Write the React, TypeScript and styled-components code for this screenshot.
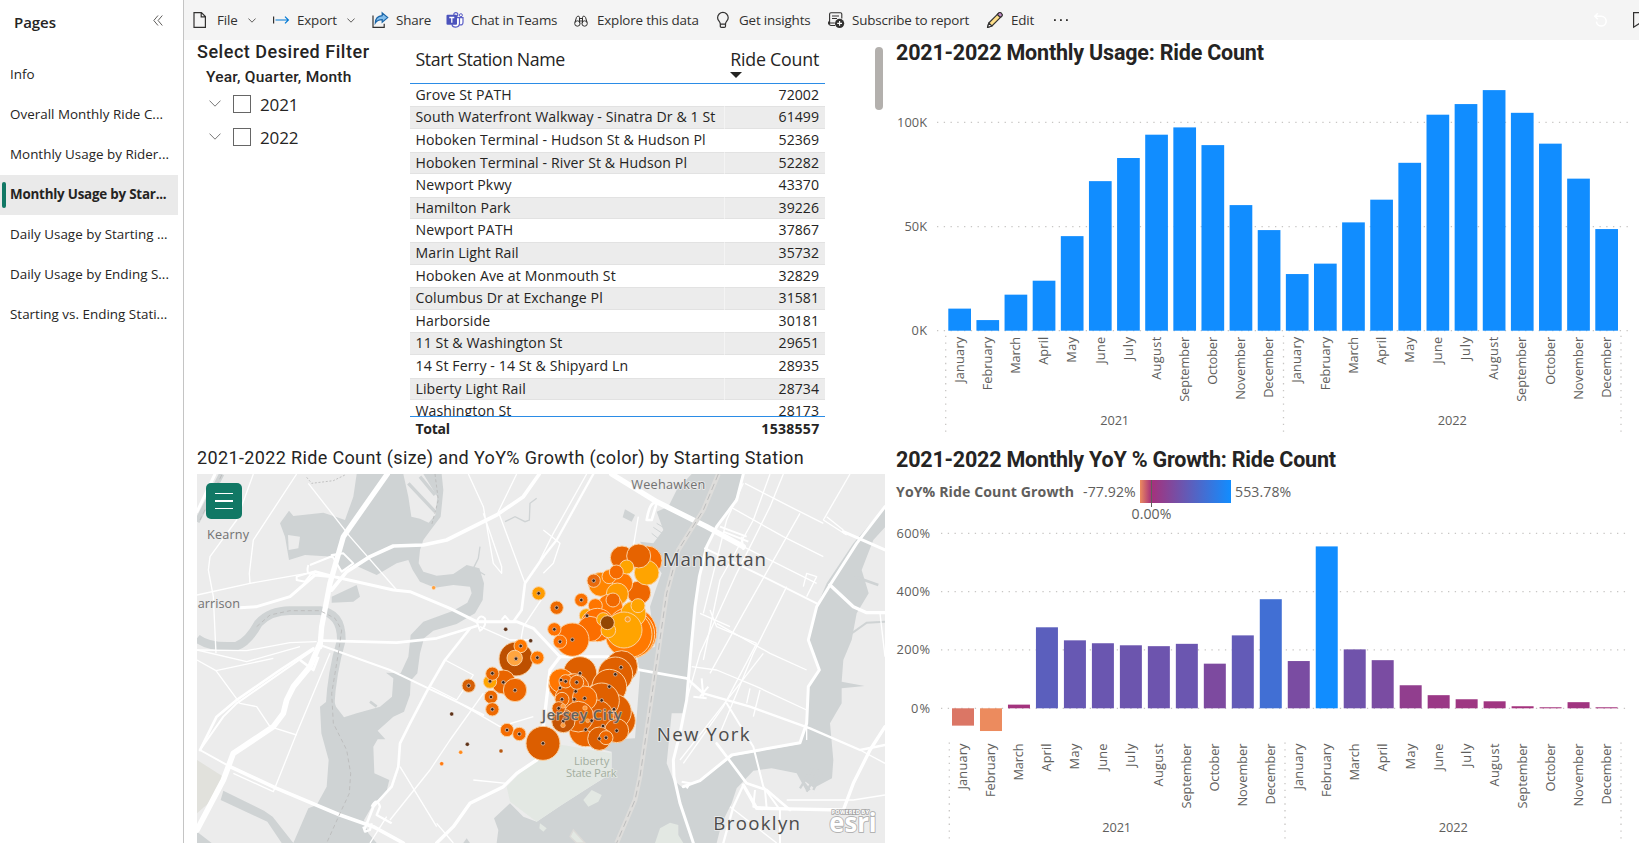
import React from 'react';
import styled, { createGlobalStyle } from 'styled-components';

const UI = '"Open Sans", "Noto Sans", sans-serif';
const DIN = 'Roboto, "Liberation Sans", sans-serif';

const Global = createGlobalStyle`
  *, *::before, *::after { box-sizing: border-box; }
  body { margin: 0; background: #fff; font-family: ${UI}; color: #252423; overflow: hidden; }
`;

/* ---------- shell ---------- */

const Shell = styled.div`
  display: flex;
  width: 1639px;
  height: 843px;
  overflow: hidden;
`;

const Sidebar = styled.nav`
  flex: 0 0 184px;
  border-right: 1px solid #c4c4c4;
  display: flex;
  flex-direction: column;
`;

const SidebarHead = styled.div`
  height: 55px;
  padding: 11px 20px 0 14px;
  display: flex;
  justify-content: space-between;
`;

const SidebarTitle = styled.h1`
  margin: 0;
  font-size: 15px;
  line-height: 23px;
  font-weight: 600;
  letter-spacing: -0.05px;
`;

const CollapseIcon = styled.svg`
  width: 10px;
  height: 11px;
  margin-top: 4px;
`;

const PageItem = styled.div<{ $active?: boolean }>`
  display: flex;
  align-items: center;
  width: 178px;
  height: 40px;
  padding: 0 0 2px 2px;
  font-size: 13.4px;
  letter-spacing: ${p => (p.$active ? '-0.22px' : '0.02px')};
  font-weight: ${p => (p.$active ? 700 : 400)};
  background: ${p => (p.$active ? '#eaeaea' : 'transparent')};
  white-space: nowrap;
  &::before {
    content: '';
    width: 4px;
    height: 26px;
    margin: 1px 4px 0 0;
    border-radius: 2px;
    background: ${p => (p.$active ? '#117865' : 'transparent')};
  }
`;

const Main = styled.main`
  flex: 1;
  min-width: 0;
  display: flex;
  flex-direction: column;
`;

/* ---------- toolbar ---------- */

const Toolbar = styled.header`
  flex: 0 0 40px;
  background: #f4f4f4;
  display: flex;
  align-items: center;
  padding-left: 9px;
  overflow: hidden;
`;

const Tool = styled.div<{ $w: number }>`
  flex: 0 0 ${p => p.$w}px;
  display: flex;
  align-items: center;
  gap: 8px;
  font-size: 13.4px;
  letter-spacing: -0.17px;
  white-space: nowrap;
  color: #323130;
`;

const Icon = styled.svg`
  flex: 0 0 16px;
  width: 16px;
  height: 16px;
  overflow: visible;
`;

const SmallChevron = styled.svg`
  width: 8px;
  height: 5px;
  margin-left: 2px;
`;

const ToolbarEnd = styled.div`
  flex: 1;
  display: flex;
  justify-content: flex-end;
  gap: 24px;
  margin-right: -9px;
`;

/* ---------- report ---------- */

const Report = styled.div`
  flex: 1;
  display: flex;
  min-height: 0;
`;

const LeftColumn = styled.div`
  flex: 0 0 711px;
  display: flex;
  flex-direction: column;
`;

const RightColumn = styled.div`
  flex: 1;
  min-width: 0;
  display: flex;
  flex-direction: column;
`;

const TopRow = styled.div`
  height: 400px;
  display: flex;
  padding-left: 13px;
`;

const Slicer = styled.section`
  flex: 0 0 213px;
  font-family: ${DIN};
`;

const SlicerTitle = styled.h2`
  margin: 0;
  font-size: 18px;
  line-height: 24px;
  font-weight: 500;
  letter-spacing: 0.53px;
  white-space: nowrap;
`;

const SlicerField = styled.div`
  padding-left: 9px;
  margin-top: 1px;
  font-size: 15.5px;
  line-height: 24px;
  font-weight: 500;
  letter-spacing: 0.24px;
  white-space: nowrap;
`;

const SlicerRow = styled.div`
  display: flex;
  align-items: center;
  height: 33px;
  padding: 0 0 2px 12px;
  font-family: ${UI};
  font-size: 17px;
  letter-spacing: -0.1px;
`;

const SlicerChevron = styled.svg`
  width: 12px;
  height: 7px;
  margin: -3px 12px 0 0;
`;

const CheckBox = styled.span`
  width: 18px;
  height: 18px;
  border: 1px solid #666;
  margin: -1px 9px 0 0;
`;

/* ---------- table ---------- */

const TableWrap = styled.section`
  width: 415px;
  display: flex;
  flex-direction: column;
`;

const TableHead = styled.div`
  height: 44px;
  display: flex;
  justify-content: space-between;
  padding: 7px 6px 0 5.5px;
  border-bottom: 1px solid #2b8ce6;
  font-size: 17.8px;
  line-height: 24px;
  letter-spacing: -0.42px;
`;

const SortedHead = styled.div`
  display: flex;
  flex-direction: column;
  align-items: flex-start;
  letter-spacing: -0.22px;
`;

const SortArrow = styled.span`
  width: 0;
  height: 0;
  margin-top: 1px;
  border: 6px solid transparent;
  border-top-color: #252423;
  border-bottom: 0;
`;

const TableBody = styled.div`
  height: 335px;
  overflow: hidden;
  border-bottom: 1px solid #2b8ce6;
`;

const TableRow = styled.div<{ $odd?: boolean; $total?: boolean }>`
  height: 22.6px;
  display: flex;
  background: ${p => (p.$odd ? '#ececec' : '#fff')};
  font-size: 14.1px;
  line-height: ${p => (p.$total ? '24.6px' : '22.6px')};
  font-weight: ${p => (p.$total ? 700 : 400)};
  white-space: nowrap;
  box-shadow: ${p => (p.$odd ? 'inset 0 1px #e2e2e2, inset 0 -1px #e2e2e2' : 'none')};
`;

const NameCell = styled.div<{ $total?: boolean }>`
  width: 315px;
  padding-left: 5.5px;
  border-right: 1px solid rgba(255, 255, 255, 0.45);
  letter-spacing: ${p => (p.$total ? '-0.3px' : '0.1px')};
`;

const CountCell = styled.div<{ $total?: boolean }>`
  flex: 1;
  padding-right: ${p => (p.$total ? 5.5 : 6)}px;
  text-align: right;
  letter-spacing: ${p => (p.$total ? '0.25px' : '0.02px')};
`;

const ScrollThumb = styled.div`
  width: 8px;
  height: 63px;
  margin: 7px 0 0 50px;
  border-radius: 4px;
  background: #b3b0ad;
`;

/* ---------- map ---------- */

const MapCard = styled.section`
  padding-left: 13px;
`;

const MapTitle = styled.h2`
  margin: 0;
  height: 34px;
  padding-top: 6px;
  font: 400 18px/24px ${DIN};
  letter-spacing: 0.36px;
  white-space: nowrap;
`;

const MapFrame = styled.div`
  position: relative;
  width: 688px;
  height: 369px;
`;

const MapSvg = styled.svg`
  display: block;
  width: 688px;
  height: 369px;
`;

const MapMenu = styled.div`
  position: absolute;
  left: 9px;
  top: 9px;
  width: 36px;
  height: 36px;
  border-radius: 5px;
  background: #117865;
  display: flex;
  flex-direction: column;
  align-items: center;
  justify-content: center;
  gap: 6px;
  span {
    width: 18px;
    height: 1.5px;
    background: #fff;
  }
`;

/* ---------- charts ---------- */

const ChartTitle = styled.h2`
  margin: 0;
  padding-left: 1px;
  font: 700 21.5px/26px ${DIN};
  letter-spacing: -0.2px;
  white-space: nowrap;
`;

const UsageCard = styled.section`
  height: 407px;
`;

const GrowthCard = styled.section`
  flex: 1;
`;

const ChartSvg = styled.svg<{ $h: number }>`
  display: block;
  width: 744px;
  height: ${p => p.$h}px;
  font-family: ${UI};
  font-size: 12.8px;
  fill: #605e5c;
`;

const Legend = styled.div`
  display: flex;
  height: 45px;
  padding: 7px 0 0 1px;
  font-size: 14.1px;
  line-height: 23px;
  letter-spacing: 0.1px;
  color: #605e5c;
  white-space: nowrap;
`;

const LegendName = styled.strong`
  width: 187px;
`;

const LegendMin = styled.span`
  width: 57px;
`;

const LegendRamp = styled.div`
  position: relative;
  width: 91px;
  height: 23px;
  margin-right: 4px;
  background: linear-gradient(to right, #ec8b5e, #a6317b 12.3%, #118dff);
`;

const LegendZero = styled.div`
  position: absolute;
  left: 11px;
  top: 0;
  width: 1px;
  height: 27px;
  background: #605e5c;
  display: flex;
  justify-content: center;
  span { margin-top: 22px; }
`;

/* ---------- data ---------- */

const PAGES = [
  'Info',
  'Overall Monthly Ride C...',
  'Monthly Usage by Rider...',
  'Monthly Usage by Star...',
  'Daily Usage by Starting ...',
  'Daily Usage by Ending S...',
  'Starting vs. Ending Stati...',
];

const STATIONS: [string, number][] = [
  ['Grove St PATH', 72002],
  ['South Waterfront Walkway - Sinatra Dr & 1 St', 61499],
  ['Hoboken Terminal - Hudson St & Hudson Pl', 52369],
  ['Hoboken Terminal - River St & Hudson Pl', 52282],
  ['Newport Pkwy', 43370],
  ['Hamilton Park', 39226],
  ['Newport PATH', 37867],
  ['Marin Light Rail', 35732],
  ['Hoboken Ave at Monmouth St', 32829],
  ['Columbus Dr at Exchange Pl', 31581],
  ['Harborside', 30181],
  ['11 St & Washington St', 29651],
  ['14 St Ferry - 14 St & Shipyard Ln', 28935],
  ['Liberty Light Rail', 28734],
  ['Washington St', 28173],
];

const MONTHS: [string, number][] = [
  ['January', 46], ['February', 53.5], ['March', 37], ['April', 28], ['May', 26], ['June', 27],
  ['July', 23.5], ['August', 43], ['September', 65], ['October', 48], ['November', 63], ['December', 61],
];

const RIDES = [
  10.6, 5.1, 17.3, 24, 45.4, 71.8, 82.9, 94.1, 97.6, 89.1, 60.3, 48.3,
  27.2, 32.2, 52, 62.9, 80.6, 103.7, 108.8, 115.5, 104.6, 89.8, 73, 48.8,
];

const GROWTH = [
  -59.4, -77.9, 12.6, 277.7, 233, 223, 216, 213, 221, 153, 250, 374,
  162, 555, 202, 165, 79, 45, 31, 24, 7, 3.5, 21, 3.5,
];

const mix = (a: number[], b: number[], t: number) =>
  `rgb(${a.map((v, i) => Math.round(v + (b[i] - v) * t)).join(',')})`;

const growthColor = (v: number) =>
  v < 0
    ? mix([166, 49, 123], [236, 139, 94], Math.min(1, -v / 77.92))
    : mix([166, 49, 123], [17, 141, 255], Math.min(1, v / 553.78));

/* ---------- icons ---------- */

const FileIcon = () => (
  <Icon viewBox="0 0 16 16" fill="none" stroke="#323130" strokeWidth="1.2">
    <path d="M1 .6h7.4l4 4v10.800H1zM8.200.8v4h4" />
  </Icon>
);
const ExportIcon = () => (
  <Icon viewBox="0 0 16 16" fill="none" strokeWidth="1.2">
    <path d="M.6 4.5v7" stroke="#323130" />
    <path d="M2.5 8h13M12 4.6 15.4 8 12 11.4" stroke="#0078d4" />
  </Icon>
);
const ShareIcon = () => (
  <Icon viewBox="0 0 16 16" fill="none" strokeWidth="1.2">
    <path d="M1 3.5v11.8h11.2v-3.6" stroke="#323130" />
    <path d="M10.2.9 15.700 5.6l-5.5 4.7V7.6C6.900 7.600 4.700 8.700 3.300 11 3.400 7 5.900 4 10.200 3.600z" fill="#83beec" stroke="#1a65a8" />
  </Icon>
);
const TeamsIcon = () => (
  <Icon viewBox="0 0 16 16">
    <circle cx="8.800" cy="2.600" r="2" fill="none" stroke="#5b5fc7" strokeWidth="1.200" />
    <circle cx="13.900" cy="3.200" r="1.500" fill="none" stroke="#5b5fc7" />
    <path d="M6.500 5.700h6v5.500c0 5-7 5-7.500 1.200M12.500 5.700h3.500v4.500c0 2.600-1.600 3-3.300 2.600" fill="#fff" stroke="#5b5fc7" strokeWidth="1.200" />
    <rect x="-.5" y="2.800" width="10.500" height="10" rx="1" fill="#4b53bc" />
    <path d="M2.300 5.500h5M4.800 5.500v5.200" stroke="#fff" strokeWidth="1.300" />
  </Icon>
);
const BinocularsIcon = () => (
  <Icon viewBox="0 0 16 16" fill="none" stroke="#323130" strokeWidth="1">
    <circle cx="4.400" cy="11.500" r="2.700" />
    <circle cx="11.600" cy="11.500" r="2.700" />
    <path d="M1.900 10.500 3.500 5.300c.6-1.500 3-1.500 3 0v6M14.100 10.500 12.500 5.300c-.6-1.500-3-1.500-3 0v6M6.500 6.500h3M6.800 9h2.400" />
  </Icon>
);
const BulbIcon = () => (
  <Icon viewBox="0 0 16 16" fill="none" stroke="#323130" strokeWidth="1.200">
    <path d="M5.300 12c0-2.500-2.700-3.200-2.700-6.300a5.300 5.300 0 0 1 10.600 0c0 3.100-2.700 3.800-2.700 6.300v2.200q0 1.200-1.200 1.200H6.500q-1.200 0-1.200-1.200zM5.300 12.200H10.500" />
  </Icon>
);
const SubscribeIcon = () => (
  <Icon viewBox="0 0 16 16" fill="none" stroke="#323130" strokeWidth="1.100">
    <path d="M7 13.500H3q-1.500 0-1.500-1.500H.600V10h1V2q0-1.300 1.400-1.300h9.500q1.300 0 1.300 1.300v4.500M4 4h7M4 6.500h5M.800 11h6" />
    <circle cx="11.600" cy="11.400" r="4.600" fill="#323130" stroke="none" />
    <path d="M9.200 11.400h4.800M11.600 9v4.800" stroke="#fff" />
  </Icon>
);
const PencilIcon = () => (
  <Icon viewBox="0 0 16 16" strokeWidth="1.100" stroke="#323130" strokeLinejoin="round">
    <path d="M.500 15.500 1.800 11 11.900.900c1.500-1.200 4.200 1.300 3.100 3L4.900 14z" fill="#ffe08a" />
    <path d="M10.300 2.500 11.900.900c1.500-1.200 4.200 1.300 3.100 3l-1.600 1.600z" fill="#c38bc8" />
    <path d="M1.800 11 4.900 14l-4.400 1.500z" fill="#fff" />
  </Icon>
);
const DotsIcon = () => (
  <Icon viewBox="0 0 16 16" fill="#323130">
    <rect x="1" y="7.200" width="1.800" height="1.800" />
    <rect x="7" y="7.200" width="1.800" height="1.800" />
    <rect x="13" y="7.200" width="1.800" height="1.800" />
  </Icon>
);
const ResetIcon = () => (
  <Icon viewBox="0 0 16 16" fill="none" stroke="#fff" strokeWidth="1.500">
    <path d="M3 4.300h6.300a4.900 4.900 0 1 1-4.900 5.400M5.800 1.300 2.800 4.300l3 3" />
  </Icon>
);
const BookmarkIcon = () => (
  <Icon viewBox="0 0 16 16" fill="none" stroke="#323130" strokeWidth="1.200">
    <path d="M1.600.6h11.800v14.600L7.500 11.400 1.600 15.200z" />
  </Icon>
);

const Chevron = () => (
  <SmallChevron viewBox="0 0 8 5" fill="none" stroke="#605e5c">
    <path d="M.4.500 4 4.200 7.600.500" />
  </SmallChevron>
);

const TOOLS: { icon: React.ReactNode; label: string; w: number; menu?: boolean }[] = [
  { icon: <FileIcon />, label: 'File', w: 80, menu: true },
  { icon: <ExportIcon />, label: 'Export', w: 99, menu: true },
  { icon: <ShareIcon />, label: 'Share', w: 75 },
  { icon: <TeamsIcon />, label: 'Chat in Teams', w: 126 },
  { icon: <BinocularsIcon />, label: 'Explore this data', w: 142 },
  { icon: <BulbIcon />, label: 'Get insights', w: 113 },
  { icon: <SubscribeIcon />, label: 'Subscribe to report', w: 159 },
  { icon: <PencilIcon />, label: 'Edit', w: 66 },
  { icon: <DotsIcon />, label: '', w: 30 },
];

/* ---------- map drawing ---------- */

type Bubble = [x: number, y: number, r: number, fill: string];

const BUBBLES: Bubble[] = [
  [622, 92, 44, '#f76c00'], [546, 83, 35, '#e86400'], [597, 188, 35, '#ee6700'], [545, 160, 33, '#ff7800'],
  [620, 128, 37, '#ffa400'], [596, 78, 36, '#e66300'], [482, 163, 36, '#ff8500'], [560, 111, 21, '#ffa400'],
  [507, 140, 21, '#ff7f00'], [529, 126, 21, '#f66b00'], [461, 152, 20, '#e96a0c'], [532, 192, 33, '#ff9a00'],
  [510, 230, 38, '#ff7700'], [519, 210, 21, '#f06800'], [466, 227, 21, '#ff7500'], [439, 257, 21, '#ffa400'],
  [573, 308, 77, '#ff7000'], [572, 313, 72, '#ff7a00'], [566, 313, 70, '#ff7900'], [580, 252, 38, '#ffa400'],
  [594, 227, 21, '#ffa400'], [472, 285, 50, '#ff7000'], [450, 297, 38, '#fb6e00'], [552, 300, 54, '#ffa400'],
  [490, 268, 20, '#ffa400'], [505, 301, 22, '#ffa400'], [502, 278, 21, '#934704'], [563, 268, 8, '#ff9d20'],
  [397, 329, 50, '#fa6d00'], [360, 335, 20, '#ff7200'], [343, 298, 20, '#ff7200'], [424, 210, 20, '#fa7000'],
  [350, 233, 20, '#ee6a00'], [296, 190, 20, '#ff9d00'], [228, 387, 51, '#bd5000'], [242, 348, 20, '#ff7800'],
  [224, 384, 23, '#ffa53f'], [292, 383, 20, '#ff7800'], [190, 456, 36, '#e96500'], [150, 455, 20, '#ffa400'],
  [157, 431, 20, '#ea6700'], [225, 480, 35, '#ec6600'], [153, 501, 20, '#ea6700'], [157, 538, 20, '#ee6900'],
  [86, 467, 20, '#d55f05'], [201, 600, 20, '#f56c00'], [238, 612, 20, '#f56c00'], [309, 640, 51, '#dc5e00'],
  [420, 430, 50, '#dd5f00'], [545, 410, 48, '#dc5e00'], [526, 433, 52, '#e06000'], [508, 470, 52, '#e06000'],
  [536, 572, 50, '#e06000'], [521, 545, 53, '#e06000'], [437, 600, 50, '#ea6500'], [485, 512, 53, '#e06000'],
  [370, 466, 44, '#ee6800'], [363, 452, 36, '#ff7600'], [403, 475, 44, '#ee6800'], [385, 505, 40, '#e96500'],
  [470, 560, 50, '#e06000'], [434, 505, 37, '#f46b00'], [377, 454, 20, '#f46b00'], [410, 457, 21, '#e96500'],
  [366, 508, 21, '#ea6600'], [415, 560, 46, '#e56300'], [370, 573, 35, '#c65505'], [356, 535, 20, '#e06000'],
  [530, 602, 36, '#e06000'], [478, 626, 35, '#dc5e00'], [498, 623, 21, '#ee6800'],
];

const PINS: [number, number][] = [
  [461, 152], [441, 257], [397, 329], [360, 335], [343, 298], [424, 210], [350, 233], [296, 190], [242, 348],
  [228, 386], [292, 383], [190, 457], [150, 454], [157, 430], [225, 481], [153, 501], [157, 538], [86, 467],
  [201, 600], [238, 612], [309, 640], [420, 430], [543, 412], [526, 433], [508, 470], [485, 511], [522, 538],
  [437, 599], [363, 450], [377, 454], [360, 474], [410, 457], [407, 484], [403, 508], [366, 508], [434, 505],
  [356, 535], [370, 573], [455, 572], [489, 588], [530, 602], [478, 626], [498, 623],
];

const FREE_DOTS: Bubble[] = [
  [197, 298, 6, '#5e3218'], [272, 332, 6, '#5e3218'], [35, 552, 6, '#5e3218'], [82, 643, 6, '#5e3218'],
  [183, 663, 6, '#b65a14'], [62, 667, 6, '#ff8a1c'], [5, 701, 6, '#ff7a10'], [-19, 173, 6, '#ffa03c'],
  [369, 528, 7, '#ff9c3c'], [435, 534, 7, '#ff9c3c'], [369, 586, 7, '#ff9c3c'], [443, 572, 6, '#ff9c3c'],
];

const WATER = [
  'M500 102 L755 102 L760 150 L752 230 L722 270 L700 300 L690 330 L686 370 L700 395 L740 407 L790 402 L830 375 L868 385 L882 430 L878 480 L855 520 L800 552 L730 572 L702 595 L690 640 L682 700 L662 722 L660 765 L642 815 L610 830 L563 872 L586 898 L563 898 L550 920 L553 1000 L598 1020 L590 1052 L545 1100 L522 1140 L535 1180 L560 1209 L310 1209 L355 1105 L380 1095 L410 1040 L416 960 L394 880 L390 800 L428 770 L438 800 L462 832 L500 820 L570 800 L606 770 L610 715 L588 698 L632 700 L655 650 L662 585 L700 545 L790 512 L832 488 L845 460 L840 440 L790 435 L735 443 L690 425 L668 390 L655 360 L620 370 L560 405 L500 378 L455 390 L430 350 L345 345 L297 360 L285 290 L270 250 L297 212 L310 228 L400 218 L430 228 L465 240 L490 170 Z',
  'M100 1052 L222 1112 L248 1130 L310 1209 L275 1209 L232 1145 L92 1080 Z',
  'M21 1175 L65 1209 L21 1209 Z',
  'M425 470 L500 435 L510 470 L490 485 L425 488 Z',
  'M1505 102 L1660 102 L1640 180 L1580 260 L1550 320 L1530 400 L1515 490 L1500 640 L1490 760 L1485 820 L1445 820 L1430 970 L1450 1020 L1480 1045 L1530 1022 L1630 948 L1830 912 L1850 850 L1855 740 L1888 690 L1855 600 L1880 500 L1910 430 L1990 310 L2085 200 L2085 262 L2050 300 L2015 390 L2036 460 L2000 520 L1985 600 L1960 660 L1955 725 L2024 738 L1955 745 L1955 790 L1920 850 L1930 960 L1926 1015 L1850 1055 L1820 1000 L1745 985 L1690 992 L1640 1045 L1625 1090 L1595 1150 L1580 1209 L920 1209 L925 1170 L912 1135 L960 1090 L1000 1130 L1040 1145 L1110 1098 L1200 1040 L1265 1000 L1265 935 L1140 905 L1335 895 L1350 700 L1340 640 L1395 620 L1380 500 L1400 440 L1415 400 L1350 305 L1390 310 L1420 270 L1400 215 L1435 200 L1460 150 Z',
  'M1305 208 L1335 225 L1325 245 L1298 232 Z',
  'M820 1209 L830 1195 L840 1209 Z',
];

const LAND = [
  'M640 102 L700 102 L742 170 L736 225 L716 248 L690 236 L664 230 L655 170 Z',
  'M294 285 L330 290 L325 325 L296 330 Z',
  'M1840 1020 L1880 1050 L1870 1060 Z',
];

const HIGHWAYS: [string, number][] = [
  ['M592 102 L460 290 L420 430 L395 560 L390 620', 16],
  ['M1048 102 L1000 170 L920 225 L770 300 L700 315 L610 318 L540 350 L470 395 L425 450', 11],
  ['M375 395 L440 412 L610 450 L660 455 L780 505 L860 545 L980 545 L1030 565 L1110 650 L1300 650', 9],
  ['M400 602 L620 608 L740 595 L860 558', 8],
  ['M390 610 L360 680 L310 740 L290 780 L280 820 L250 860 L130 940 L100 1020 L21 1170', 17],
  ['M370 625 L270 690 L140 780 L80 830 L30 930', 8],
  ['M370 630 L140 790 L100 830 L30 930 L120 980', 6],
  ['M120 980 L260 1045 L450 1125 L550 1160 L640 1209', 11],
  ['M390 615 L600 690 L715 745 L810 790 L880 825', 6],
  ['M840 565 L765 660 L710 755 L660 850 L630 910 L625 980 L605 1040 L550 1100 L525 1165', 8],
  ['M1040 960 L980 1000 L940 1040 L840 1090 L790 1160 L740 1209', 10],
  ['M150 503 L200 500 L300 470 L375 405 L430 410', 9],
  ['M21 215 L75 102', 9],
  ['M1060 350 L1005 430 L995 510 L970 545', 8],
  ['M1210 102 L1100 300 L1060 350', 7],
  ['M1265 102 L1400 185 L1550 260 L1660 320', 16],
  ['M1545 325 L1700 400 L1880 490', 6],
  ['M1660 102 L1640 180 L1580 260 L1550 320 L1528 410 L1515 500 L1500 660 L1490 780 L1470 880 L1450 960 L1452 1010 L1470 1090 L1510 1209', 9],
  ['M1480 1040 L1530 1022 L1625 945 L1830 908 L1850 850 L1855 740 L1888 690 L1855 600 L1880 500 L1920 435 L2000 310 L2085 200', 9],
  ['M1920 435 L1990 500 L2030 518 L2085 518', 10],
  ['M1960 275 L2085 330', 9],
  ['M1340 688 L1490 715 L1540 760', 8],
  ['M1540 760 L1680 800 L1860 865 L2010 930 L2085 915', 7],
  ['M1580 910 L1670 1030 L1730 1050 L1800 1110', 8],
  ['M1610 790 L1690 920 L1720 1040 L1770 1110 L1770 1209', 6],
  ['M1660 1035 L1700 1105 L1960 1110 L1990 1030 L2040 930 L2085 860', 10],
  ['M1660 1035 L1630 1100 L1600 1209', 7],
  ['M1110 650 L1080 690 L1060 860', 10],
];

const STREETS = [
  'M190 102 L140 240 L60 350 L55 390 L70 470 L78 640', 'M320 102 L190 300 L178 400 L180 430', 'M21 465 L180 430 L350 400',
  'M355 130 L480 290 L620 450', 'M21 630 L170 632 L300 608 L380 605', 'M21 630 L170 665 L330 620', 'M21 660 L78 692 L250 655',
  'M78 692 L150 790 L200 800 L240 860 L320 885', 'M420 640 L320 880 L250 1055 L130 1000', 'M835 102 L880 200 L910 370 L935 400 L935 380 L880 220',
  'M980 102 L925 215 L1005 430', 'M1060 470 L1000 560 L985 640', 'M870 560 L960 600 L1030 600', 'M765 660 L850 705 L800 780 L720 740',
  'M880 760 L780 900 L720 990 L600 1140', 'M630 980 L740 1160', 'M810 790 L930 860 L1030 830', 'M1190 102 L1090 280 L1050 360', 'M1060 270 L1110 310 L1090 370 L1060 400',
  'M1345 230 L1330 320', 'M1665 130 L1800 200 L1900 250', 'M1660 130 L1610 240 L1540 520', 'M1740 102 L1690 240 L1590 420 L1540 660',
  'M1780 102 L1740 200 L1640 400 L1530 640 L1490 780', 'M1830 220 L1660 520 L1560 700', 'M1790 440 L1690 640 L1590 880',
  'M1580 550 L1740 640 L1850 690', 'M1530 520 L1620 560', 'M1505 680 L1580 690 L1700 740 L1850 810', 'M1620 200 L1780 290 L1900 350',
  'M1600 290 L1820 400 L1880 430', 'M1560 510 L1580 560 L1700 610', 'M1720 640 L1580 820 L1470 960', 'M1700 610 L1600 800 L1480 970',
  'M1900 240 L1980 102', 'M1900 240 L1970 285 M1910 230 L1960 270', 'M1850 820 L1850 900', 'M1710 750 L1690 830', 'M1680 745 L1670 790',
  'M1790 1080 L1990 1080 L2085 1065', 'M1620 1100 L1760 1209', 'M2070 520 L2085 650', 'M2010 930 L2085 970', 'M1840 440 L1850 400 L1880 410 L1850 470',
  'M850 1020 L950 1030 L990 990', 'M740 1150 L790 1209', 'M590 1130 L540 1209',
];

const LINES: [string, string][] = [
  ['M350 112 L365 130 L430 122 L465 105', '6 5'],
  ['M735 102 L745 180 L725 255', '9 7'],
  ['M95 105 L30 240', '14 9'],
  ['M200 560 L240 525 L300 512 L390 512 L435 535 L455 570 L445 640 L425 760 L430 850 L470 930 L482 1000 L478 1060 L450 1120 L410 1209', '12 9'],
];

const STATE_LINE = 'M1585 102 L1540 210 L1465 330 L1430 460 L1395 700 L1350 1010 L1335 1080 L1280 1209';

const StationMap = () => (
  <MapSvg viewBox="21 102 2064 1107" preserveAspectRatio="none">
    <rect x="21" y="102" width="2064" height="1107" fill="#ececec" />
    <path d="M21 960 L60 985 L100 1010 L55 1090 L21 1120Z" fill="#e1e1dc" />
    {WATER.map(d => <path key={d} d={d} fill="#cfd3d4" />)}
    <g fill="none" stroke="#cfd3d4">
      <path d="M21 595 Q60 625 140 618 Q175 605 205 550 Q240 512 300 512 L390 512 Q455 520 454 600 Q425 700 420 800" strokeWidth="26" />
      <path d="M95 102 L55 180 L21 245" strokeWidth="16" />
      <path d="M945 245 L975 230 L1005 245 L1018 240 L1020 190 L1040 175" strokeWidth="4" />
      <path d="M870 320 L865 355 L850 385 L885 405" strokeWidth="4" />
      <path d="M540 785 L560 800" strokeWidth="8" />
      <path d="M2085 545 L2030 548 L1985 580" strokeWidth="6" />
      <path d="M1400 250 L1430 268 M1390 262 L1420 282 M1385 280 L1405 296" strokeWidth="3" />
      <path d="M1995 410 L2065 435" strokeWidth="8" />
    </g>
    {LAND.map(d => <path key={d} d={d} fill="#ececec" />)}
    <path d="M690 110 L735 165 M655 130 L735 215" stroke="#cfd3d4" strokeWidth="10" />
    <g fill="#e3e8e3">
      <path d="M1060 905 L1265 940 L1262 1000 L1200 1040 L1110 1098 L1040 1145 L960 1085 L950 1040 L1030 960Z" />
      <path d="M1395 1209 L1410 1165 L1440 1148 L1465 1155 L1465 1185 L1480 1209Z" />
      <path d="M1050 1150 L1070 1165 L1060 1175 L1048 1165Z" />
      <path d="M1180 1080 L1205 1050 L1235 1065 L1225 1085 L1195 1100Z" />
      <path d="M1140 1190 L1150 1170 L1185 1209 L1160 1209Z" stroke="#dcdad7" strokeWidth="4" />
    </g>
    <path d="M1830 1045 L1870 980 M1850 1055 L1885 990 M1870 1050 L1895 1000" stroke="#cfd3d4" strokeWidth="7" />
    <g fill="none" stroke="#fff" strokeWidth="4" strokeLinejoin="round">
      {STREETS.map(d => <path key={d} d={d} />)}
      <path d="M425 345 L460 340 L490 370 L455 395 Z M360 375 L435 345 M320 410 L370 395 L345 425 L320 420Z M355 375 Q345 410 375 400" strokeWidth="6" />
      <path d="M860 545 Q870 520 885 535 Q890 560 870 572Z M935 540 L945 528 L960 545" strokeWidth="6" />
      <path d="M1370 240 Q1380 180 1400 190 L1385 240Z M330 660 L370 690 L385 650" strokeWidth="8" />
      <path d="M545 1100 Q560 1070 570 1100 L560 1125 L605 1150 M520 1160 L525 1175 L540 1170 L545 1150" strokeWidth="7" />
      <path d="M1695 1050 L1690 1100 L1800 1108 M1725 1050 L1730 1105 M1475 1025 L1500 1030 L1490 1045" strokeWidth="6" />
      <path d="M1530 770 L1555 740 M1510 770 L1550 775 M1535 715 L1540 770" strokeWidth="6" />
      <path d="M1590 260 L1670 290 M1600 275 L1675 305 M1655 290 L1660 330" strokeWidth="6" />
    </g>
    <g fill="none" stroke="#fff" strokeLinejoin="round" strokeLinecap="round">
      {HIGHWAYS.map(([d, w]) => <path key={d} d={d} strokeWidth={w} />)}
    </g>
    <g fill="none" stroke="#b9b9b9" strokeWidth="2.500">
      {LINES.map(([d, dash]) => <path key={d} d={d} strokeDasharray={dash} />)}
    </g>
    <path d={STATE_LINE} fill="none" stroke="#dedddb" strokeWidth="14" />
    <path d={STATE_LINE} fill="none" stroke="#bdbdbd" strokeWidth="3" strokeDasharray="20 12" />

    <g transform="translate(750 270)">
      <g stroke="#fbd0a0" strokeWidth="3">
        {BUBBLES.map(([x, y, r, c], i) => <circle key={i} cx={x} cy={y} r={r} fill={c} />)}
      </g>
      {FREE_DOTS.map(([x, y, r, c], i) => <circle key={i} cx={x} cy={y} r={r} fill={c} stroke="#fff" strokeOpacity="0.5" strokeWidth="2" />)}
      {PINS.map(([x, y], i) => <circle key={i} cx={x} cy={y} r="5.500" fill="#33251d" stroke="#d8a888" strokeWidth="3" />)}
    </g>

    <g fontFamily={UI} fontWeight="500" stroke="#ececec" strokeWidth="5" strokeLinejoin="round" paintOrder="stroke">
      <g fontSize="38" fill="#727272">
        <text x="51" y="296" textLength="126">Kearny</text>
        <text x="23" y="505" textLength="127">arrison</text>
        <text x="1324" y="146" textLength="222">Weehawken</text>
      </g>
      <g fontSize="56" fill="#4c4c4c">
        <text x="1418" y="379" textLength="310">Manhattan</text>
        <text x="1400" y="902" textLength="279">New York</text>
        <text x="1570" y="1169" textLength="260">Brooklyn</text>
      </g>
      <text x="1055" y="840" textLength="240" fontSize="43" fontWeight="600" fill="#5f5f5f" stroke="#e8d8c8" strokeOpacity="0.6">Jersey City</text>
      <g fontSize="34" fill="#a3aea0" stroke="#e3e8e3">
        <text x="1152" y="975" textLength="106">Liberty</text>
        <text x="1128" y="1011" textLength="152">State Park</text>
      </g>
    </g>
    <g fontFamily={UI} fill="#fff" stroke="#8d8d8d" strokeOpacity="0.6" strokeWidth="6" paintOrder="stroke" strokeLinejoin="round">
      <text x="1925" y="1122" fontSize="17" fontWeight="700" textLength="112">POWERED BY</text>
      <text x="1918" y="1177" fontSize="80" fontWeight="700" textLength="142" lengthAdjust="spacingAndGlyphs">esri</text>
    </g>
  </MapSvg>
);

/* ---------- charts ---------- */

interface AxisChartProps {
  height: number;
  values: number[];
  color: (v: number) => string;
  zero: number;
  unit: number;
  first: number;
  pitch: number;
  barWidth: number;
  ticks: [number, string, number][];
  tickX: number;
  gridFrom: number;
  gridTo: number;
  labelTop: number;
  seps: number[];
  years: [string, number][];
  yearY: number;
}

const AxisChart = (p: AxisChartProps) => (
  <ChartSvg $h={p.height} viewBox={`0 0 744 ${p.height}`}>
    {p.ticks.map(([v, label, len]) => (
      <g key={label}>
        <path d={`M${p.gridFrom} ${p.zero - v * p.unit}H${p.gridTo}`} stroke="#c8c6c4" strokeWidth="1.300" strokeDasharray="1.300 5.460" />
        <text x={p.tickX - len} y={p.zero - v * p.unit + 4.300} textLength={len}>{label}</text>
      </g>
    ))}
    {p.values.map((v, i) => {
      const h = Math.abs(v * p.unit);
      const x = p.first + i * p.pitch;
      return <rect key={i} x={x} y={v < 0 ? p.zero : p.zero - h} width={p.barWidth} height={h} fill={p.color(v)} />;
    })}
    {p.values.map((_, i) => {
      const [name, len] = MONTHS[i % 12];
      const x = p.first + i * p.pitch + p.barWidth / 2 + 4.200;
      return (
        <text key={i} transform={`translate(${x} ${p.labelTop + len}) rotate(-90)`} textLength={len}>{name}</text>
      );
    })}
    {p.seps.map(x => (
      <path key={x} d={`M${x} ${p.labelTop - 1}V${p.labelTop + 96}`} stroke="#c8c6c4" strokeWidth="1.300" strokeDasharray="1.300 5.460" />
    ))}
    {p.years.map(([y, x]) => (
      <text key={y} x={x - 14.500} y={p.yearY} textLength="29">{y}</text>
    ))}
  </ChartSvg>
);

/* ---------- app ---------- */

export default function App() {
  return (
    <Shell>
      <Global />
      <Sidebar>
        <SidebarHead>
          <SidebarTitle>Pages</SidebarTitle>
          <CollapseIcon viewBox="0 0 10 11" fill="none" stroke="#605e5c">
            <path d="M5 .500.800 5.500 5 10.500M9.300.500 5.100 5.500l4.200 5" />
          </CollapseIcon>
        </SidebarHead>
        {PAGES.map((name, i) => <PageItem key={name} $active={i === 3}>{name}</PageItem>)}
      </Sidebar>
      <Main>
        <Toolbar>
          {TOOLS.map(t => (
            <Tool key={t.label} $w={t.w}>
              {t.icon}
              {t.label && <span>{t.label}</span>}
              {t.menu && <Chevron />}
            </Tool>
          ))}
          <ToolbarEnd>
            <ResetIcon />
            <BookmarkIcon />
          </ToolbarEnd>
        </Toolbar>
        <Report>
          <LeftColumn>
            <TopRow>
              <Slicer>
                <SlicerTitle>Select Desired Filter</SlicerTitle>
                <SlicerField>Year, Quarter, Month</SlicerField>
                {['2021', '2022'].map(y => (
                  <SlicerRow key={y}>
                    <SlicerChevron viewBox="0 0 12 7" fill="none" stroke="#777">
                      <path d="M.500.600 6 6.200 11.500.600" />
                    </SlicerChevron>
                    <CheckBox />
                    <span>{y}</span>
                  </SlicerRow>
                ))}
              </Slicer>
              <TableWrap>
                <TableHead>
                  <span>Start Station Name</span>
                  <SortedHead>
                    <span>Ride Count</span>
                    <SortArrow />
                  </SortedHead>
                </TableHead>
                <TableBody>
                  {STATIONS.map(([name, count], i) => (
                    <TableRow key={name} $odd={i % 2 === 1}>
                      <NameCell>{name}</NameCell>
                      <CountCell>{count}</CountCell>
                    </TableRow>
                  ))}
                </TableBody>
                <TableRow $total>
                  <NameCell $total>Total</NameCell>
                  <CountCell $total>1538557</CountCell>
                </TableRow>
              </TableWrap>
              <ScrollThumb />
            </TopRow>
            <MapCard>
              <MapTitle>2021-2022 Ride Count (size) and YoY% Growth (color) by Starting Station</MapTitle>
              <MapFrame>
                <StationMap />
                <MapMenu><span /><span /><span /></MapMenu>
              </MapFrame>
            </MapCard>
          </LeftColumn>
          <RightColumn>
            <UsageCard>
              <ChartTitle>2021-2022 Monthly Usage: Ride Count</ChartTitle>
              <AxisChart
                height={380}
                values={RIDES}
                color={() => '#118dff'}
                zero={264.700}
                unit={2.083}
                first={53.3}
                pitch={28.13}
                barWidth={22.7}
                ticks={[[0, '0K', 15.500], [50, '50K', 22.500], [100, '100K', 30]]}
                tickX={32}
                gridFrom={42}
                gridTo={734}
                labelTop={270.800}
                seps={[50.7, 388.500, 726]}
                years={[['2021', 219.700], ['2022', 557.300]]}
                yearY={358.500}
              />
            </UsageCard>
            <GrowthCard>
              <ChartTitle>2021-2022 Monthly YoY % Growth: Ride Count</ChartTitle>
              <Legend>
                <LegendName>YoY% Ride Count Growth</LegendName>
                <LegendMin>-77.92%</LegendMin>
                <LegendRamp>
                  <LegendZero><span>0.00%</span></LegendZero>
                </LegendRamp>
                <span>553.78%</span>
              </Legend>
              <AxisChart
                height={325}
                values={GROWTH}
                color={growthColor}
                zero={190.300}
                unit={0.2917}
                first={57}
                pitch={27.98}
                barWidth={22}
                ticks={[[0, '0%', 19], [200, '200%', 33.500], [400, '400%', 33.500], [600, '600%', 33.500]]}
                tickX={35}
                gridFrom={46}
                gridTo={731}
                labelTop={225.500}
                seps={[54.300, 390, 726]}
                years={[['2021', 221.700], ['2022', 558.300]]}
                yearY={313.500}
              />
            </GrowthCard>
          </RightColumn>
        </Report>
      </Main>
    </Shell>
  );
}
